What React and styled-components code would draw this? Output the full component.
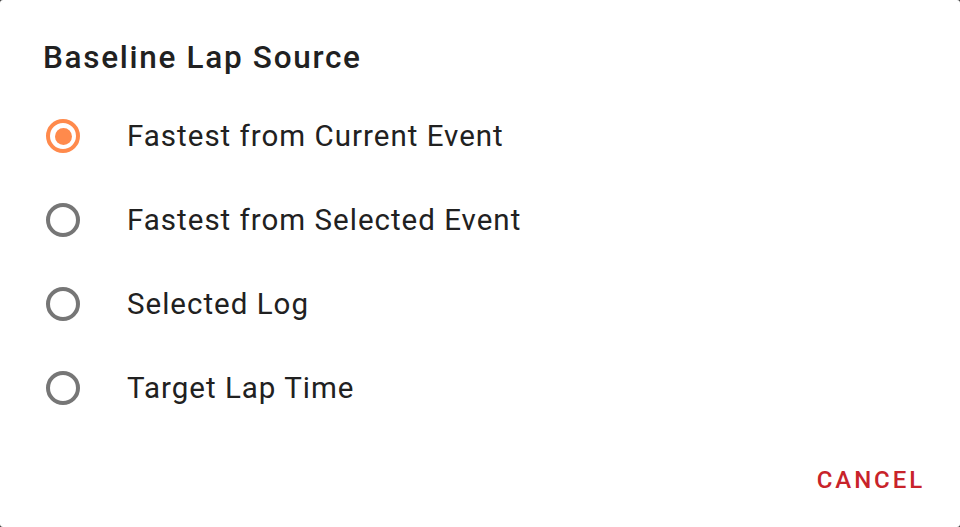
import React, { useState } from 'react'
import styled, { createGlobalStyle } from 'styled-components'

const Global = createGlobalStyle`
  html, body {
    margin: 0;
    padding: 0;
    background: #3a3a3a;
  }
  * { box-sizing: border-box; }
`

const Dialog = styled.div`
  width: 960px;
  height: 527px;
  background: #ffffff;
  border-radius: 3px;
  display: flex;
  flex-direction: column;
  font-family: Roboto, "Noto Sans", sans-serif;
  color: #212121;
`

const Title = styled.h2`
  margin: 0;
  padding: 38px 43px 0;
  font-size: 31.5px;
  font-weight: 500;
  line-height: 40px;
  letter-spacing: 1.7px;
`

const List = styled.div`
  display: flex;
  flex-direction: column;
  padding-top: 16px;
`

const Row = styled.label`
  height: 84px;
  display: flex;
  align-items: center;
  padding-left: 46px;
  cursor: pointer;
`

const Ring = styled.span`
  width: 34px;
  height: 34px;
  border-radius: 50%;
  border: 4px solid ${p => (p.$on ? '#ff8a4c' : '#767676')};
  display: flex;
  align-items: center;
  justify-content: center;
  flex-shrink: 0;
`

const Dot = styled.span`
  width: 17px;
  height: 17px;
  border-radius: 50%;
  background: #ff8a4c;
`

const Label = styled.span`
  margin-left: 47px;
  font-size: 29.5px;
  font-weight: 400;
  letter-spacing: 1px;
`

const Footer = styled.div`
  margin-top: auto;
  display: flex;
  justify-content: flex-end;
  padding: 0 35px 32px 0;
`

const Cancel = styled.button`
  background: none;
  border: 0;
  padding: 0;
  font-family: Roboto, "Noto Sans", sans-serif;
  font-size: 24px;
  font-weight: 500;
  letter-spacing: 2.9px;
  color: #c8232a;
  line-height: 30px;
  cursor: pointer;
`

const options = [
  'Fastest from Current Event',
  'Fastest from Selected Event',
  'Selected Log',
  'Target Lap Time',
]

export default function App() {
  const [sel, setSel] = useState(0)
  return (
    <>
      <Global />
      <Dialog>
        <Title>Baseline Lap Source</Title>
        <List>
          {options.map((o, i) => (
            <Row key={o} onClick={() => setSel(i)}>
              <Ring $on={sel === i}>{sel === i && <Dot />}</Ring>
              <Label>{o}</Label>
            </Row>
          ))}
        </List>
        <Footer>
          <Cancel>CANCEL</Cancel>
        </Footer>
      </Dialog>
    </>
  )
}
